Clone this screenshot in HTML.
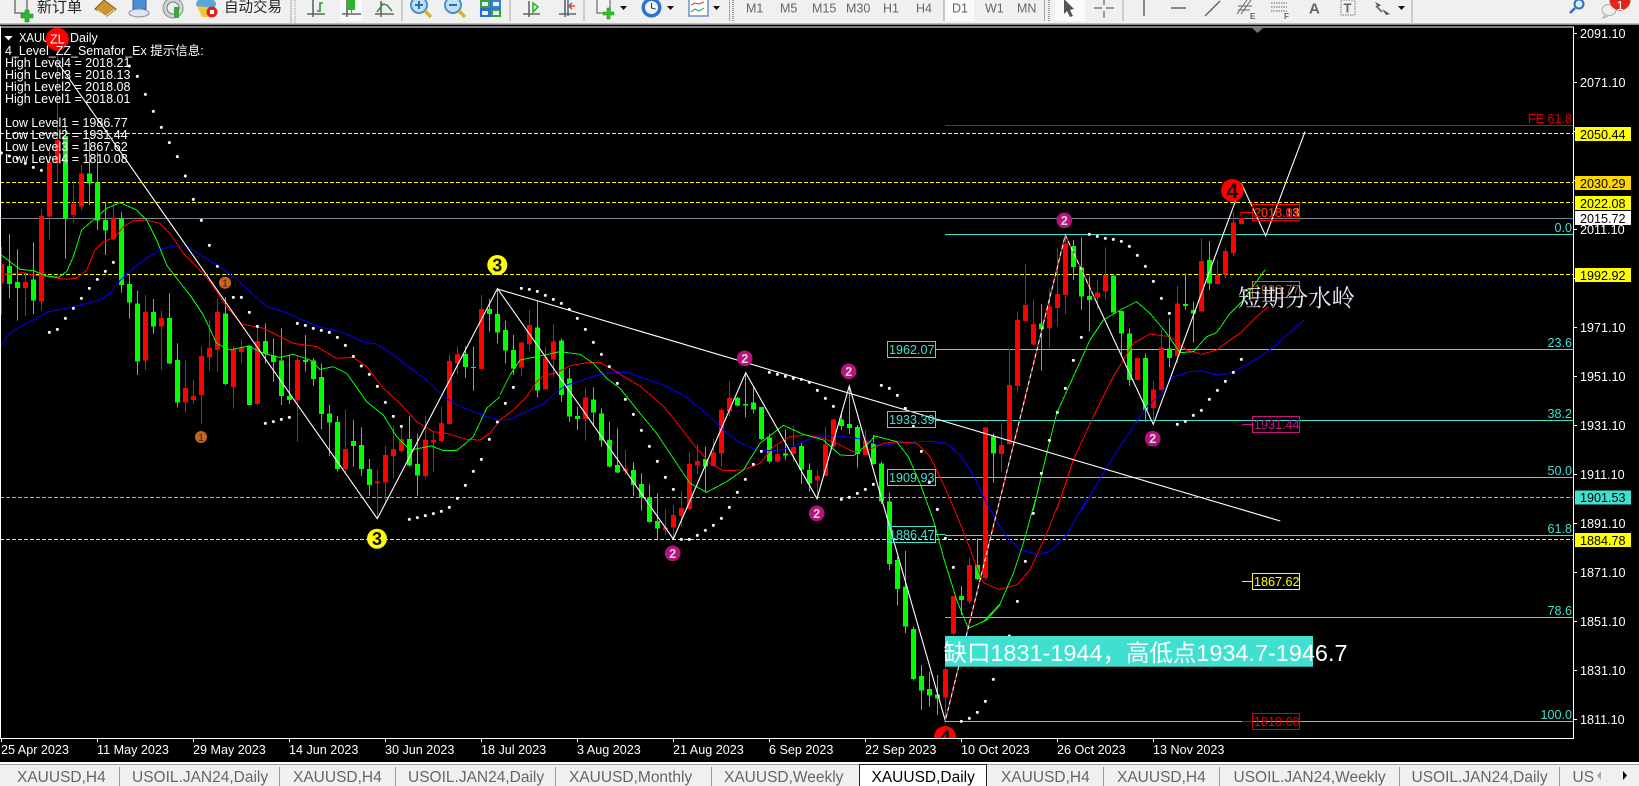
<!DOCTYPE html>
<html><head><meta charset="utf-8"><title>XAUUSD,Daily</title>
<style>
html,body{margin:0;padding:0;background:#000;width:1639px;height:786px;overflow:hidden}
svg{display:block;font-family:"Liberation Sans","Noto Sans CJK SC",sans-serif}
.ax{fill:#fff;font-size:12.6px}
.tag{fill:#000;font-size:12.6px}
.lv{fill:#fff;font-size:12.5px}
.fib{fill:#40e0d0;font-size:12.6px}
.tf{fill:#666;font-size:12.5px}
.tab{fill:#666;font-size:15.5px}
.gw{stroke:#0f0;stroke-width:1;fill:none}.gb{stroke:#0f0;stroke-width:5;fill:none}
.rw{stroke:#f00;stroke-width:1;fill:none}.rb{stroke:#f00;stroke-width:5;fill:none}
.ma{fill:none;stroke-width:3;shape-rendering:crispEdges}
.dots{fill:none;stroke:#fff;stroke-width:9;stroke-linecap:round}
</style></head>
<body>
<svg width="1639" height="786" viewBox="0 0 1639 786" xmlns="http://www.w3.org/2000/svg">
<defs><clipPath id="ch"><rect x="1" y="28" width="1572" height="710"/></clipPath>
<clipPath id="tb"><rect x="0" y="0" width="1639" height="23"/></clipPath></defs>
<rect width="1639" height="786" fill="#000"/>

<!-- toolbar -->
<rect width="1639" height="23.500" fill="#f0f0f0"/>
<rect y="23.500" width="1639" height="1.500" fill="#8a8a8a"/>
<rect y="25" width="1639" height="1" fill="#000"/>
<rect y="26.500" width="1574" height="1" fill="#fff"/>
<g clip-path="url(#tb)">
<rect x="15" y="-3" width="12" height="16" fill="#eee" stroke="#777" stroke-width="1.500"/>
<path d="M25 10h4v4h4v4h-4v4h-4v-4h-4v-4h4z" fill="#2db52d" stroke="#1a8a1a" stroke-width=".6"/>
<text x="37" y="12" font-size="15" fill="#222">新订单</text>
<path d="M95 9l9-9 12 9-9 7z" fill="#c9962f" stroke="#7a5a17"/><path d="M97 10l9 6 9-7" stroke="#f5e1a0" fill="none"/>
<rect x="133" y="-2" width="13" height="11" fill="#4d8fd6" stroke="#2a5f9c"/><ellipse cx="139" cy="13" rx="10" ry="4" fill="#dde6f0" stroke="#889"/>
<circle cx="173" cy="8" r="10" fill="#cfd6d6" stroke="#888"/><circle cx="173" cy="8" r="6" fill="#eee" stroke="#777"/><path d="M174 7h5v11h-5z" fill="#3fa63f"/>
<ellipse cx="206" cy="4" rx="10" ry="6" fill="#5aa6dc"/><path d="M197 6l5 11h10l5-9z" fill="#efc93a"/><circle cx="212" cy="12" r="5.500" fill="#d8261c"/><rect x="210" y="10" width="4" height="4" fill="#fff"/>
<text x="224" y="12" font-size="14.500" fill="#222">自动交易</text>
<path d="M291 0V23" stroke="#aaa"/><path d="M295 0V23" stroke="#999" stroke-dasharray="1 1"/>
<rect x="340" y="0" width="22" height="21" fill="#fafafa"/>
<path d="M313 0V17M307 14H325M347 0V17M342 14H361M381 1V17M375 14H394M529 1V17M523 14H540M565 0V17M559 14H576" stroke="#5e6a5e" stroke-width="1.600" fill="none"/>
<path d="M317 11h3V3h3" stroke="#2a9a2a" stroke-width="1.600" fill="none"/>
<rect x="348" y="-1" width="7" height="11" fill="#2bb52b"/><path d="M351.500 10v3" stroke="#2bb52b"/>
<path d="M377 12l6-8 4 1 5 6" stroke="#2a8a4a" stroke-width="1.500" fill="none"/>
<circle cx="419" cy="5" r="8" fill="#bfe0f8" stroke="#4a90c8" stroke-width="2"/><path d="M419 1v8M415 5h8" stroke="#2b6fb0" stroke-width="2"/><path d="M425 11l6 6" stroke="#d8b23a" stroke-width="3.500"/>
<circle cx="453" cy="5" r="8" fill="#bfe0f8" stroke="#4a90c8" stroke-width="2"/><path d="M449 5h8" stroke="#2b6fb0" stroke-width="2"/><path d="M459 11l6 6" stroke="#d8b23a" stroke-width="3.500"/>
<rect x="480" y="0" width="21" height="17" fill="#2f6fc4"/><rect x="491" y="0" width="10" height="8" fill="#3a7fd0"/><rect x="491" y="9" width="10" height="8" fill="#3aa040"/><rect x="480" y="0" width="10" height="8" fill="#3aa040"/><rect x="482" y="2" width="6" height="4" fill="#e8f2ff"/><rect x="493" y="2" width="6" height="4" fill="#e8f2ff"/><rect x="482" y="11" width="6" height="4" fill="#e8f2ff"/><rect x="493" y="11" width="6" height="4" fill="#e8f2ff"/>
<path d="M533 3l5 4-5 5z" fill="none" stroke="#2bb52b" stroke-width="1.600"/>
<path d="M568 0V16" stroke="#2b6fb0" stroke-width="1.500"/><path d="M569 6h6M572 3l-3 3 3 3" stroke="#d8501c" stroke-width="1.600" fill="none"/>
<path d="M402 0V21M510 0V21M584 0V21M729.500 0V21M1123 0V21M1412 0V23" stroke="#a8a8a8"/>
<path d="M733 0V21M1049 0V21" stroke="#999" stroke-dasharray="1 1" stroke-width="2"/>
<path d="M1044.500 0V21" stroke="#a8a8a8"/>
<rect x="597" y="-1" width="13" height="14" fill="#f4f4f4" stroke="#777" stroke-width="1.300"/>
<path d="M607 7h3v4h4v3h-4v4h-3v-4h-4v-3h4z" fill="#2bc42b" stroke="#1a8a1a" stroke-width=".5" transform="translate(0 1)"/>
<path d="M620 6h7l-3.500 4z M667 6h7l-3.500 4z M713 6h7l-3.500 4z M1398 6h7l-3.500 4z" fill="#111"/>
<circle cx="651.500" cy="7.500" r="10" fill="#2b74c8"/><circle cx="651.500" cy="7.500" r="6.500" fill="#eef3f8"/><path d="M651.500 3v5l4 1" stroke="#333" fill="none"/>
<rect x="689" y="-1" width="19" height="17" fill="#fff" stroke="#4f86c4" stroke-width="1.300"/><path d="M691 5l4-2 4 1 5-2" stroke="#d03a2a" fill="none"/><path d="M691 12l4-3 4 2 5-3" stroke="#2ba02b" fill="none"/>
<text x="746" y="12.500" class="tf">M1</text><text x="780" y="12.500" class="tf">M5</text><text x="812" y="12.500" class="tf">M15</text><text x="846" y="12.500" class="tf">M30</text><text x="883" y="12.500" class="tf">H1</text><text x="916" y="12.500" class="tf">H4</text>
<rect x="944" y="0" width="30" height="21" fill="#fafafa"/><path d="M944 0V21" stroke="#999"/>
<text x="952" y="12.500" class="tf">D1</text><text x="985" y="12.500" class="tf">W1</text><text x="1017" y="12.500" class="tf">MN</text>
<rect x="1055" y="0" width="30" height="21" fill="#fafafa"/>
<path d="M1064-1l0 15 3-3 3 6 3-1-3-6 4-1z" fill="#555"/>
<path d="M1094 8h8M1106 8h8M1104-1v6M1104 11v7" stroke="#666" stroke-width="1.200"/>
<path d="M1144 0V16" stroke="#666" stroke-width="1.500"/><path d="M1171 8H1186" stroke="#666" stroke-width="1.500"/><path d="M1205 16L1220 1" stroke="#666" stroke-width="1.500"/>
<path d="M1237 14l10-14M1241 14l10-14M1238 6h14M1238 10h12" stroke="#666" stroke-width="1"/><text x="1250" y="19" font-size="8" font-weight="bold" fill="#666">E</text>
<path d="M1271 3h16M1271 7h16M1271 11h16" stroke="#666" stroke-dasharray="1.500 1"/><text x="1284" y="19" font-size="8" font-weight="bold" fill="#666">F</text>
<text x="1309" y="13.500" font-size="15" font-weight="bold" fill="#666">A</text>
<rect x="1341" y="0" width="14" height="15" fill="none" stroke="#777" stroke-dasharray="1.500 1"/><text x="1343.500" y="12.500" font-size="13" font-weight="bold" fill="#666">T</text>
<path d="M1375 2l6 3-3 2zM1382 9l8 5-4 1z" fill="#555"/><path d="M1376 6l6 6" stroke="#555" stroke-width="1.500"/>
<circle cx="1579" cy="4" r="4.500" fill="#dceaf8" stroke="#2b6fc0" stroke-width="2"/><path d="M1575 8l-5 5" stroke="#2b6fc0" stroke-width="2.500"/>
<ellipse cx="1609" cy="10" rx="7" ry="5.500" fill="#eee" stroke="#aaa"/><path d="M1605 15l-2 3 5-2" fill="#eee" stroke="#aaa"/>
<circle cx="1620" cy="0" r="10.500" fill="#e0261c"/><text x="1616.500" y="10" font-size="13" fill="#fff">1</text>
</g>

<!-- chart frame -->
<path d="M.5 26V738" stroke="#fff"/>
<path d="M0 738.500H1574M1573.500 27V739" stroke="#fff"/>

<g clip-path="url(#ch)">
<!-- horizontal lines -->
<path d="M0 133.500H1573M0 182.500H1573M0 202.500H1573M0 274.500H1573M0 539.500H1573" stroke="#ff0" stroke-dasharray="4 2" fill="none" shape-rendering="crispEdges"/>
<path d="M0 497.500H1573" stroke="#40e0d0" stroke-dasharray="4 2" fill="none" shape-rendering="crispEdges"/>
<path d="M0 218.500H1573" stroke="#778899" fill="none" shape-rendering="crispEdges"/>
<path d="M945 125.500H1573" stroke="#d80000" fill="none" shape-rendering="crispEdges"/>
<path d="M945 234.500H1573M935 349.500H1573M935 420.500H1573M935 477.500H1573M945 535.500H1573M945 617.500H1573M945 721.500H1573M935 534.500H945V535" stroke="#40e0d0" fill="none" shape-rendering="crispEdges"/>

<!-- candles -->
<g shape-rendering="crispEdges">
<g transform="matrix(1 0 0 .33333 0 150)">
<path class="gw" d="M9.5 252V445M17.5 298V512M33.5 277V492M65.5-72V326M89.5-34V165M97.5 8V240M105.5 157V315M121.5 186V428M129.5 372V506M137.5 422V675M153.5 447V552M169.5 430V642M177.5 580V772M225.5 442V706M249.5 585V765M265.5 520V640M273.5 565V695M281.5 535V765M289.5 615V762M305.5 555V665M313.5 625V708M321.5 640V838M329.5 765V918M337.5 798V965M353.5 810V950M361.5 832V978M369.5 927V1038M409.5 798V950M417.5 852V1038M465.5 590V683M473.5 590V722M489.5 446V545M497.5 415V580"/>
<path class="gb" d="M9.5 348V402M17.5 396V414M33.5 388V452M65.5-42V205M89.5 70V100M97.5 98V212M105.5 210V242M121.5 205V405M129.5 402V458M137.5 460V635M153.5 486V530M169.5 504V640M177.5 630V758M225.5 490V702M249.5 588V765M265.5 573V612M273.5 617V636M281.5 632V738M289.5 738V750M305.5 630V636M313.5 632V687M321.5 681V792M329.5 790V818M337.5 816V957M353.5 873V888M361.5 885V957M369.5 957V1005M409.5 867V947M417.5 942V977M465.5 612V651M473.5 651V654M489.5 477V492M497.5 492V548"/>
<path class="rw" d="M1.5 290V495M25.5 370V498M41.5 178V480M49.5 0V268M57.5-315V97M73.5 105V218M81.5 45V180M113.5 160V270M145.5 435V660M161.5 482V660M185.5 632V788M193.5 690V762M201.5 588V822M209.5 508V662M217.5 445V665M233.5 588V776M241.5 568V640M257.5 530V768M297.5 618V875M345.5 780V968M377.5 960V1105M385.5 888V1055M393.5 828V985M401.5 825V908M425.5 798V985M433.5 848V965M441.5 770V878M449.5 615V822M457.5 590V672M481.5 435V657"/>
<path class="rb" d="M1.5 342V400M25.5 396V414M41.5 198V455M49.5 36V200M57.5-30V40M73.5 162V195M81.5 70V170M113.5 202V268M145.5 486V632M161.5 504V530M185.5 714V758M193.5 738V750M201.5 618V735M209.5 594V622M217.5 486V600M233.5 598V711M241.5 592V606M257.5 573V762M297.5 630V752M345.5 897V957M377.5 995V1001M385.5 915V998M393.5 897V918M401.5 867V903M425.5 870V978M433.5 870V878M441.5 819V873M449.5 633V822M457.5 612V640M481.5 477V657"/>
</g>
<g transform="matrix(1 0 0 .33333 0 300)">
<path class="gw" d="M505.5 62V190M513.5 105V225M537.5 2V292M561.5 115V305M569.5 205V365M577.5 320V390M593.5 262V375M601.5 325V440M609.5 365V503M617.5 385V520M633.5 487V588M641.5 520V632M649.5 553V668M657.5 580V718M705.5 440V577M737.5 290V320M745.5 218V352M753.5 262V340M761.5 320V420M769.5 400V490M785.5 388V480M801.5 430V552M809.5 490V575M841.5 340V390M849.5 258V402M857.5 375V503M873.5 405V494M881.5 485V612M889.5 578V810M897.5 770V917M905.5 753V1000"/>
<path class="gb" d="M505.5 90V152M513.5 150V205M537.5 82V272M561.5 122V285M569.5 235V350M577.5 348V357M593.5 298V338M601.5 340V422M609.5 420V500M617.5 495V518M633.5 510V555M641.5 552V592M649.5 592V666M657.5 663V686M705.5 477V500M737.5 294V316M745.5 312V316M753.5 308V328M761.5 321V417M769.5 412V485M785.5 461V466M801.5 438V509M809.5 510V550M841.5 358V378M849.5 372V384M857.5 381V462M873.5 430V492M881.5 490V605M889.5 604V792M897.5 780V867M905.5 860V980"/>
<path class="rw" d="M521.5 125V228M529.5 30V152M545.5 140V268M553.5 72V232M585.5 262V422M625.5 450V525M665.5 628V705M673.5 615V715M681.5 572V680M689.5 457V630M697.5 432V522M713.5 415V500M721.5 325V500M729.5 245V350M777.5 435V488M793.5 378V485M817.5 510V595M825.5 380V528M833.5 355V445M865.5 390V465"/>
<path class="rb" d="M521.5 128V203M529.5 75V132M545.5 172V268M553.5 124V178M585.5 292V357M625.5 505V515M665.5 682V690M673.5 645V682M681.5 624V648M689.5 492V627M697.5 483V496M713.5 457V498M721.5 330V461M729.5 294V334M777.5 462V484M793.5 441V462M817.5 528V542M825.5 433V528M833.5 358V440M865.5 422V465"/>
</g>
<g transform="matrix(1 0 0 .33333 0 500)">
<path class="gw" d="M913.5 380V542M921.5 495V630M929.5 515V620M937.5 525V645M961.5 258V345M977.5 115V240"/>
<path class="gb" d="M913.5 387V537M921.5 528V572M929.5 567V587M937.5 583V595M961.5 288V300M977.5 195V237"/>
<path class="rw" d="M945.5 480V660M953.5 288V416M969.5 172V312"/>
<path class="rb" d="M945.5 507V593M953.5 288V400M969.5 195V304"/>
</g>
<g transform="matrix(1 0 0 .33333 0 180)">
<path class="gw" d="M993.5 760V908M1041.5 372V572M1073.5 180V300M1081.5 172V390M1089.5 290V455M1113.5 286V400M1121.5 392V530M1129.5 445V618M1145.5 520V725M1169.5 415V562M1185.5 280V390M1193.5 365V488M1209.5 183V330"/>
<path class="gb" d="M993.5 770V820M1041.5 430V447M1073.5 198V261M1081.5 262V350M1089.5 348V360M1113.5 287V397M1121.5 393V460M1129.5 460V600M1145.5 534V690M1169.5 505V534M1185.5 372V378M1193.5 390V400M1209.5 240V310"/>
<path class="rw" d="M985.5 740V1200M1001.5 730V875M1009.5 505V795M1017.5 395V635M1025.5 252V423M1033.5 358V495M1049.5 325V503M1057.5 205V440M1065.5 165V402M1097.5 298V388M1105.5 202V358M1137.5 535V600M1153.5 603V722M1161.5 450V630M1177.5 318V550M1201.5 175V395M1217.5 240V315M1225.5 205V295M1233.5 95V228M1241.5 112V135"/>
<path class="rb" d="M985.5 743V1194M1001.5 795V822M1009.5 615V792M1017.5 420V618M1025.5 375V423M1033.5 432V493M1049.5 380V444M1057.5 342V384M1065.5 190V345M1097.5 337V353M1105.5 285V335M1137.5 534V600M1153.5 628V684M1161.5 502V630M1177.5 370V528M1201.5 243V395M1217.5 285V312M1225.5 213V284M1233.5 127V219M1241.5 114V132"/>
</g>
</g>

<!-- moving averages -->
<g transform="matrix(.33333 0 0 .33333 0 150)">
<polyline class="ma" stroke="#0000ff" points="4,585 30,548 60,530 100,510 140,487 180,478 220,470 260,460 300,450 330,430 360,392 400,355 440,325 480,298 520,288 560,287 600,315 650,345 700,380 750,425 800,470 850,485 900,507 950,528 1000,540 1040,552 1090,576 1130,582 1180,615 1230,655 1280,690 1330,738 1370,765 1420,785 1460,800 1500,810"/>
<polyline class="ma" stroke="#f00" points="4,372 30,372 70,368 100,375 130,378 160,383 200,388 230,385 260,360 285,300 310,275 345,262 370,230 400,212 440,210 480,220 510,250 550,310 590,350 630,395 680,470 725,522 790,535 830,555 880,580 950,590 1010,625 1060,622 1100,650 1150,715 1200,760 1250,815 1300,845 1340,850 1400,868 1440,870 1470,850 1500,810"/>
<polyline class="ma" stroke="#0f0" points="4,315 30,335 60,358 100,362 140,378 175,382 200,365 220,320 245,240 280,210 320,175 360,158 410,180 440,210 470,270 500,345 530,385 570,435 610,495 650,580 690,600 745,588 790,610 840,622 880,613 930,630 960,658 1000,650 1040,670 1100,755 1150,795 1190,860 1230,900 1295,888 1330,902 1370,902 1420,860 1460,775 1500,740"/>
</g>
<g transform="matrix(.33333 0 0 .33333 500 300)">
<polyline class="ma" stroke="#0000ff" points="0,360 30,358 70,338 130,312 170,275 200,255 250,240 290,225 340,218 380,217 440,238 490,255 550,285 600,325 640,360 680,400 720,428 760,447 800,452 840,450 880,440 920,420 960,408 1000,407 1050,412 1100,420 1140,438 1190,430 1250,425 1300,425 1340,430 1380,465 1420,525 1460,610 1500,680"/>
<polyline class="ma" stroke="#f00" points="0,360 40,330 80,290 110,245 130,228 170,218 210,197 260,188 300,188 330,203 380,235 420,258 490,318 540,380 590,445 630,490 670,512 730,510 780,490 820,440 870,410 920,405 970,415 1010,430 1060,455 1100,452 1150,430 1190,425 1250,430 1290,470 1320,530 1360,620 1400,720 1430,800 1450,848 1500,870"/>
<polyline class="ma" stroke="#0f0" points="0,285 30,225 60,180 120,168 180,155 240,163 280,190 320,235 360,265 420,340 470,400 530,490 570,550 620,577 680,545 730,510 780,430 850,376 910,403 970,420 1020,465 1060,467 1100,435 1125,408 1190,425 1225,470 1260,550 1300,660 1330,770 1370,900 1405,985 1460,960 1500,915"/>
</g>
<g transform="matrix(.33333 0 0 .33333 850 500)">
<polyline class="ma" stroke="#0000ff" points="450,80 470,110 510,148 560,163 600,155 650,105 680,50 710,0"/>
<polyline class="ma" stroke="#f00" points="450,268 500,255 540,210 590,100 630,0"/>
<polyline class="ma" stroke="#0f0" points="400,365 450,312 490,220 520,130 556,0"/>
</g>
<g transform="matrix(.33333 0 0 .33333 840 180)">
<polyline class="ma" stroke="#0000ff" points="725,990 760,930 820,830 880,740 920,680 960,645 1000,590 1050,575 1090,573 1130,585 1170,580 1210,560 1260,530 1305,497 1392,420"/>
<polyline class="ma" stroke="#f00" points="650,990 700,840 760,710 820,590 880,490 930,462 990,470 1040,510 1085,523 1130,510 1170,480 1200,460 1260,400 1287,380"/>
<polyline class="ma" stroke="#0f0" points="580,990 625,800 650,700 700,590 750,480 790,420 850,385 890,365 930,400 980,460 1020,518 1060,515 1100,470 1130,458 1170,400 1210,360 1260,290 1275,270"/>
</g>

<!-- zigzag + trendline -->
<polyline fill="none" stroke="#fff" stroke-width="1.100" points="58,62.700 377.300,518.700 497.500,288.500 673.300,539 745.700,372.700 817,498.700 849.300,386 945.300,720.700 1065.300,235 1153.300,424.300 1241.700,184 1265.700,236 1305,131.700"/>
<path d="M945.300 720.700L1065.300 235L1095 298" fill="none" stroke="#f00" stroke-dasharray="3 4" stroke-width="1"/>
<path d="M497.500 289L1280.300 521" fill="none" stroke="#fff" stroke-width="1.100"/>

<!-- parabolic SAR -->
<g transform="matrix(.33333 0 0 .33333 0 26)"><path class="dots" d="M4 381h.1M28 390h.1M52 397h.1M76 412h.1M100 424h.1M124 433h.1M388 120h.1M412 151h.1M436 205h.1M460 256h.1M484 304h.1M508 350h.1M532 392h.1"/></g>
<g transform="matrix(.33333 0 0 .33333 0 150)"><path class="dots" d="M556 78h.1M580 148h.1M604 211h.1M628 286h.1M652 349h.1M340 337h.1M316 364h.1M292 388h.1M268 415h.1M244 445h.1M220 475h.1M196 505h.1M172 538h.1M148 547h.1M700 442h.1M724 442h.1M748 487h.1M772 529h.1M796 820h.1M820 815h.1M844 808h.1M868 802h.1M892 520h.1M916 526h.1M940 535h.1M964 541h.1M988 547h.1M1012 562h.1M1036 586h.1M1060 619h.1M1084 648h.1M1108 673h.1M1132 709h.1M1156 757h.1M1180 799h.1M1204 829h.1M1228 1108h.1M1252 1103h.1M1276 1097h.1M1300 1091h.1M1324 1084h.1M1348 1072h.1M1372 1045h.1M1396 1006h.1M1420 964h.1M1444 928h.1M1468 868h.1M1492 816h.1"/></g>
<g transform="matrix(.33333 0 0 .33333 440 240)"><path class="dots" d="M244 145h.1M268 148h.1M292 154h.1M316 166h.1M340 178h.1M364 190h.1M388 208h.1M412 235h.1M436 268h.1M460 307h.1"/></g>
<g transform="matrix(.33333 0 0 .33333 500 300)"><path class="dots" d="M16 310h.1M40 262h.1M304 163h.1M328 200h.1M352 250h.1M376 298h.1M400 343h.1M424 391h.1M448 439h.1M472 484h.1M496 532h.1M520 568h.1M544 718h.1M568 718h.1M592 706h.1M616 691h.1M640 676h.1M664 655h.1M688 622h.1M712 577h.1M736 538h.1M760 493h.1M784 454h.1M808 217h.1M832 223h.1M856 229h.1M880 235h.1M904 238h.1M928 247h.1M952 271h.1M976 295h.1M1000 319h.1M1024 598h.1M1048 592h.1M1072 580h.1M1096 568h.1M1120 553h.1M1144 256h.1M1168 265h.1M1192 286h.1M1216 325h.1M1240 379h.1M1264 454h.1M1288 547h.1M1312 628h.1"/></g>
<g transform="matrix(.33333 0 0 .33333 850 500)"><path class="dots" d="M262 28h.1M286 115h.1M310 202h.1M334 664h.1M358 655h.1M382 637h.1M406 604h.1M430 538h.1M454 478h.1M478 408h.1M502 304h.1M526 184h.1M550 40h.1"/></g>
<g transform="matrix(.33333 0 0 .33333 840 180)"><path class="dots" d="M604 880h.1M628 781h.1M652 697h.1M676 625h.1M700 541h.1M724 472h.1M748 163h.1M772 169h.1M796 175h.1M820 178h.1M844 184h.1M868 199h.1M892 226h.1M916 259h.1M940 304h.1M964 355h.1M988 400h.1M1012 733h.1M1036 724h.1M1060 706h.1M1084 691h.1M1108 658h.1M1132 631h.1M1156 604h.1M1180 577h.1M1204 538h.1"/></g>

<!-- gap box -->
<rect x="945" y="636" width="368" height="30.700" fill="#40e0d0"/>
<text x="943.500" y="661" font-size="23.400" fill="#fff" textLength="404" lengthAdjust="spacingAndGlyphs">缺口1831-1944，高低点1934.7-1946.7</text>

<!-- fib boxes -->
<g fill="none" stroke="#40e0d0" shape-rendering="crispEdges">
<rect x="887.500" y="341.500" width="48" height="16"/><rect x="887.500" y="411.500" width="48" height="16"/><rect x="887.500" y="469.500" width="48" height="16"/><rect x="887.500" y="526.500" width="48" height="16"/>
</g>
<text x="889" y="354" class="fib">1962.07</text><text x="889" y="424" class="fib">1933.39</text><text x="889" y="482" class="fib">1909.93</text><text x="889" y="539" class="fib">1886.47</text>
<text x="1572" y="123" class="fib" text-anchor="end" style="fill:#e00000">FE 61.8</text>
<text x="1572" y="232" class="fib" text-anchor="end">0.0</text><text x="1572" y="347" class="fib" text-anchor="end">23.6</text><text x="1572" y="418" class="fib" text-anchor="end">38.2</text><text x="1572" y="475" class="fib" text-anchor="end">50.0</text><text x="1572" y="533" class="fib" text-anchor="end">61.8</text><text x="1572" y="615" class="fib" text-anchor="end">78.6</text><text x="1572" y="719" class="fib" text-anchor="end">100.0</text>

<!-- level boxes -->
<g fill="none" shape-rendering="crispEdges">
<rect x="1252.500" y="204.500" width="47" height="16" stroke="#f00"/><path d="M1241 216V212.500H1252" stroke="#f00"/>
<rect x="1252.500" y="281.500" width="47" height="16" stroke="#c8682a"/><path d="M1242 289.500H1252" stroke="#c8682a"/>
<rect x="1252.500" y="416.500" width="47" height="16" stroke="#c71585"/><path d="M1242 424.500H1252" stroke="#c71585"/>
<rect x="1252.500" y="573.500" width="47" height="16" stroke="#ff0"/><path d="M1242 581.500H1252" stroke="#ff0"/>
<rect x="1252.500" y="713.500" width="47" height="16" stroke="#e00000"/><path d="M1242 721.500H1252" stroke="#e00000"/>
</g>
<text x="1254" y="217" font-size="12.600" fill="#c8682a">2018.01</text><text x="1254" y="217" font-size="12.600" fill="#c71585">2018.08</text><text x="1254" y="217" font-size="12.600" fill="#ff0">2018.13</text><text x="1254" y="217" font-size="12.600" fill="#f00">2018.21</text>
<text x="1254" y="294" font-size="12.600" fill="#a85a28">1986.77</text>
<text x="1254" y="429" font-size="12.600" fill="#c71585">1931.44</text>
<text x="1254" y="586" font-size="12.600" fill="#ff0">1867.62</text>
<text x="1254" y="726" font-size="12.600" fill="#e00000">1810.08</text>
<text x="1238" y="306" font-size="23.400" fill="#e8eef8" font-family="'Noto Serif CJK SC',serif">短期分水岭</text>

<!-- semafor markers -->
<circle cx="1232.300" cy="190.300" r="11.300" fill="#f00"/><text x="1232.300" y="198" font-size="21" font-weight="bold" fill="#111" text-anchor="middle">4</text>
<circle cx="945" cy="737" r="11" fill="#f00"/><text x="945" y="745" font-size="21" font-weight="bold" fill="#111" text-anchor="middle">4</text>
<circle cx="497.300" cy="265" r="10" fill="#ff0"/><text x="497.300" y="271.500" font-size="18" font-weight="bold" fill="#111" text-anchor="middle">3</text>
<circle cx="377" cy="538.700" r="10" fill="#ff0"/><text x="377" y="545.200" font-size="18" font-weight="bold" fill="#111" text-anchor="middle">3</text>
<g fill="#b8137c"><circle cx="744.700" cy="358.300" r="7.800"/><circle cx="848.700" cy="371.300" r="7.800"/><circle cx="672.700" cy="553.300" r="7.800"/><circle cx="816.700" cy="513.300" r="7.800"/><circle cx="1064.300" cy="220.300" r="7.800"/><circle cx="1152.700" cy="438.700" r="7.800"/></g>
<g font-size="12.500" font-weight="bold" fill="#d8d8d8" text-anchor="middle"><text x="744.700" y="362.800">2</text><text x="848.700" y="375.800">2</text><text x="672.700" y="557.800">2</text><text x="816.700" y="517.800">2</text><text x="1064.300" y="224.800">2</text><text x="1152.700" y="443.200">2</text></g>
<g fill="#c8641e"><circle cx="225" cy="282.700" r="6"/><circle cx="201" cy="437" r="6"/></g>
<g font-size="10" fill="#222" text-anchor="middle"><text x="225" y="286.500">1</text><text x="201" y="441">1</text></g>

<!-- info text -->
<path d="M4.300 36H12.700L8.500 40.500z" fill="#fff"/>
<text x="19" y="42" class="lv" textLength="50" lengthAdjust="spacingAndGlyphs">XAUUSD,</text>
<text x="70" y="42" class="lv">Daily</text>
<circle cx="57.300" cy="39.300" r="11.500" fill="#f00"/>
<text x="50" y="43.500" font-size="12.500" fill="#fff">ZL</text>
<text x="5" y="55" class="lv">4_Level_ZZ_Semafor_Ex 提示信息:</text>
<text x="5" y="67" class="lv">High Level4 = 2018.21</text>
<text x="5" y="79" class="lv">High Level3 = 2018.13</text>
<text x="5" y="91" class="lv">High Level2 = 2018.08</text>
<text x="5" y="103" class="lv">High Level1 = 2018.01</text>
<text x="5" y="127" class="lv">Low Level1 = 1986.77</text>
<text x="5" y="139" class="lv">Low Level2 = 1931.44</text>
<text x="5" y="151" class="lv">Low Level3 = 1867.62</text>
<text x="5" y="163" class="lv">Low Level4 = 1810.08</text>
<path d="M1252 28h11l-5.500 5z" fill="#777"/>
</g>

<!-- price axis -->
<g stroke="#fff" shape-rendering="crispEdges"><path d="M1574 33.500h3M1574 82.500h3M1574 131.500h3M1574 180.500h3M1574 229.500h3M1574 278.500h3M1574 327.500h3M1574 376.500h3M1574 425.500h3M1574 474.500h3M1574 523.500h3M1574 572.500h3M1574 621.500h3M1574 670.500h3M1574 719.500h3"/></g>
<g class="ax">
<text x="1580" y="38" class="ax">2091.10</text><text x="1580" y="87" class="ax">2071.10</text><text x="1580" y="234" class="ax">2011.10</text><text x="1580" y="332" class="ax">1971.10</text><text x="1580" y="381" class="ax">1951.10</text><text x="1580" y="430" class="ax">1931.10</text><text x="1580" y="479" class="ax">1911.10</text><text x="1580" y="528" class="ax">1891.10</text><text x="1580" y="577" class="ax">1871.10</text><text x="1580" y="626" class="ax">1851.10</text><text x="1580" y="675" class="ax">1831.10</text><text x="1580" y="724" class="ax">1811.10</text>
</g>
<rect x="1575" y="127" width="56" height="14" fill="#ff0"/><text x="1580" y="139" class="tag">2050.44</text>
<rect x="1575" y="176" width="56" height="14" fill="#ffd700"/><text x="1580" y="188" class="tag">2030.29</text>
<rect x="1575" y="196" width="56" height="14" fill="#ff0"/><text x="1580" y="208" class="tag">2022.08</text>
<rect x="1575" y="211" width="56" height="14" fill="#fff"/><text x="1580" y="223" class="tag">2015.72</text>
<rect x="1575" y="268" width="56" height="14" fill="#ff0"/><text x="1580" y="280" class="tag">1992.92</text>
<rect x="1575" y="490.500" width="56" height="14" fill="#40e0d0"/><text x="1580" y="502" class="tag">1901.53</text>
<rect x="1575" y="533" width="56" height="14" fill="#ff0"/><text x="1580" y="545" class="tag">1884.78</text>

<!-- time axis -->
<path d="M1.500 738v4M97.500 738v4M193.500 738v4M289.500 738v4M385.500 738v4M481.500 738v4M577.500 738v4M673.500 738v4M769.500 738v4M865.500 738v4M961.500 738v4M1057.500 738v4M1153.500 738v4" stroke="#fff" shape-rendering="crispEdges"/>
<text x="1" y="754" class="ax">25 Apr 2023</text><text x="97" y="754" class="ax">11 May 2023</text><text x="193" y="754" class="ax">29 May 2023</text><text x="289" y="754" class="ax">14 Jun 2023</text><text x="385" y="754" class="ax">30 Jun 2023</text><text x="481" y="754" class="ax">18 Jul 2023</text><text x="577" y="754" class="ax">3 Aug 2023</text><text x="673" y="754" class="ax">21 Aug 2023</text><text x="769" y="754" class="ax">6 Sep 2023</text><text x="865" y="754" class="ax">22 Sep 2023</text><text x="961" y="754" class="ax">10 Oct 2023</text><text x="1057" y="754" class="ax">26 Oct 2023</text><text x="1153" y="754" class="ax">13 Nov 2023</text>

<!-- tabs -->
<rect y="762" width="1639" height="2" fill="#fff"/>
<rect y="764" width="1639" height="22" fill="#f0f0f0"/>
<path d="M0 764.500H1639" stroke="#a0a0a0"/>
<path d="M119.500 767V786M279.500 767V786M395.500 767V786M555.500 767V786M711.500 767V786M1103.500 767V786M1219.500 767V786M1399.500 767V786M1559.500 767V786" stroke="#9a9a9a" shape-rendering="crispEdges"/>
<rect x="859.500" y="764.500" width="127" height="23" fill="#fff" stroke="#222" shape-rendering="crispEdges"/>
<text x="17" y="782" class="tab">XAUUSD,H4</text><text x="132" y="782" class="tab">USOIL.JAN24,Daily</text><text x="293" y="782" class="tab">XAUUSD,H4</text><text x="408" y="782" class="tab">USOIL.JAN24,Daily</text><text x="569" y="782" class="tab">XAUUSD,Monthly</text><text x="724" y="782" class="tab">XAUUSD,Weekly</text>
<text x="871.500" y="782" class="tab" style="fill:#000">XAUUSD,Daily</text>
<text x="1001" y="782" class="tab">XAUUSD,H4</text><text x="1117" y="782" class="tab">XAUUSD,H4</text><text x="1233.500" y="782" class="tab">USOIL.JAN24,Weekly</text><text x="1411.500" y="782" class="tab">USOIL.JAN24,Daily</text><text x="1572.500" y="782" class="tab">US</text>
<path d="M1601 771v9l-4-4.500z" fill="#aaa"/><path d="M1623 771v9l4-4.500z" fill="#000"/>
</svg>
</body></html>
